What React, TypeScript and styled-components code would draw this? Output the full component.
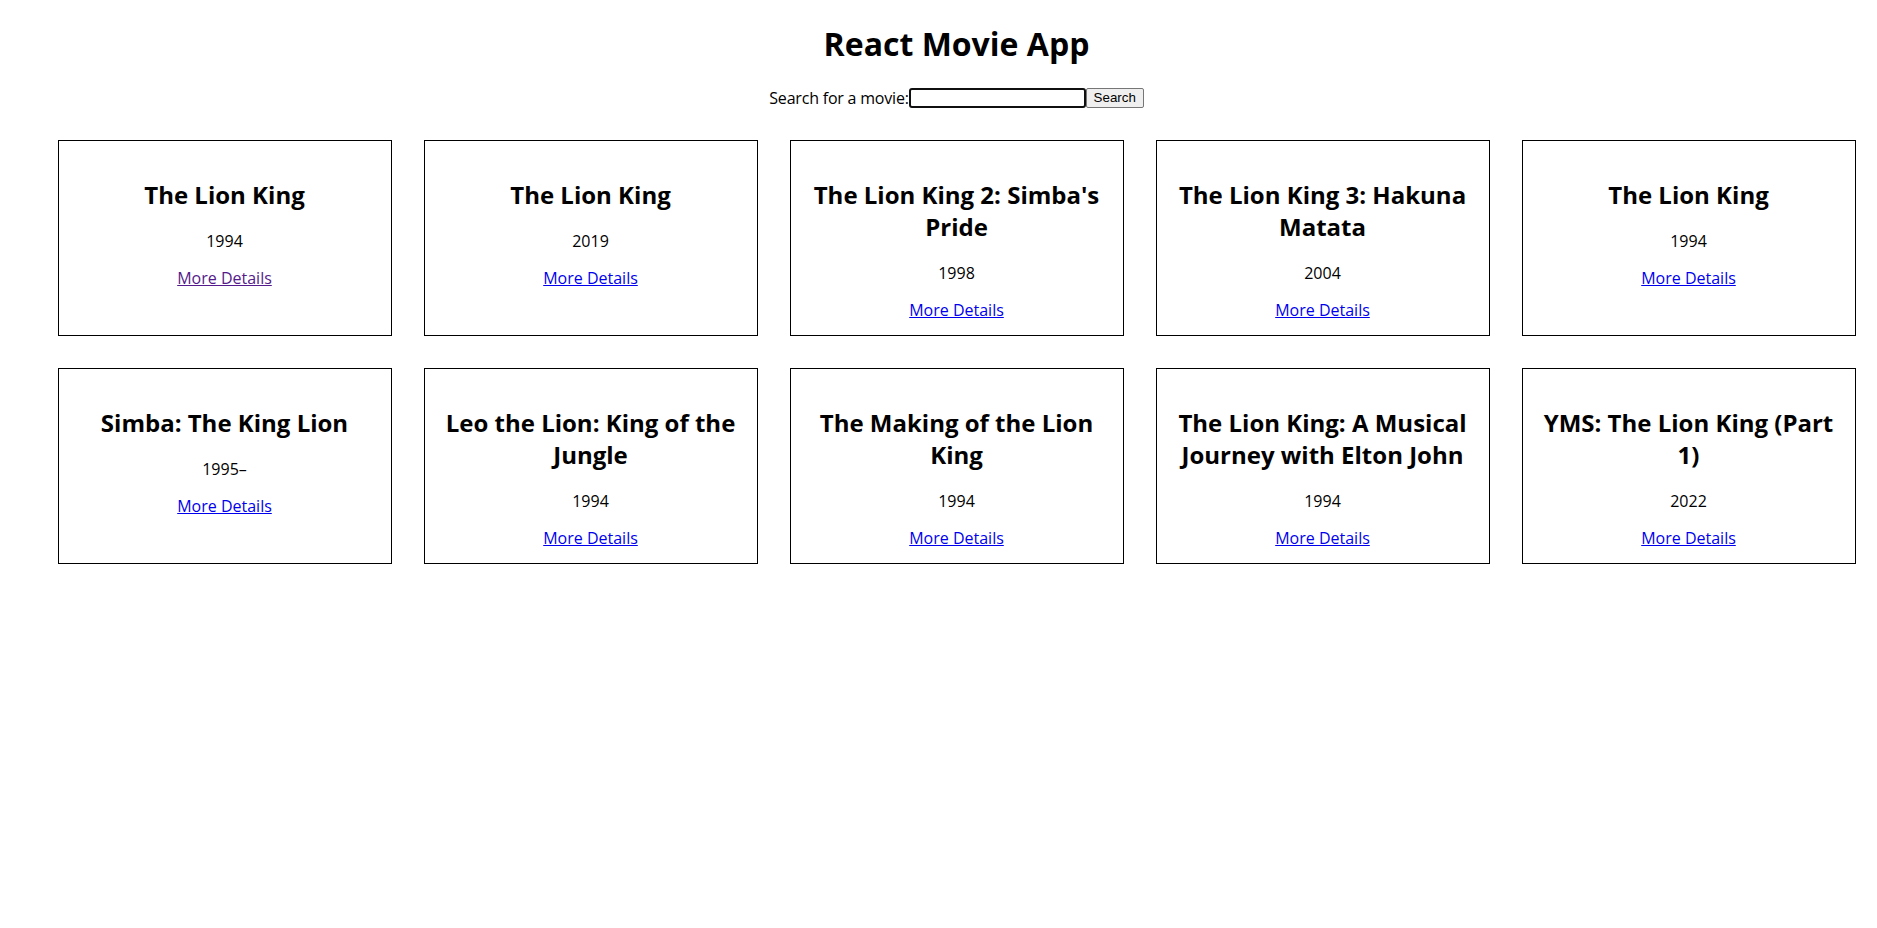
import React from "react";
import styled, { createGlobalStyle } from "styled-components";

const GlobalStyle = createGlobalStyle`
  html, body {
    margin: 0;
    padding: 0;
    background: #ffffff;
  }
  body {
    font-family: "Segoe UI", "Open Sans", "Noto Sans", sans-serif;
    color: #000000;
  }
`;

const Page = styled.div`
  box-sizing: border-box;
  width: 100%;
  padding-left: 36px;
  text-align: center;
`;

const Title = styled.h1`
  margin: 21.5px 0 21.5px;
  font-size: 32px;
  line-height: 43px;
  font-weight: 700;
`;

const SearchForm = styled.form`
  display: flex;
  justify-content: center;
  align-items: center;
  height: 24px;
  margin: 0;
`;

const Label = styled.label`
  font-size: 16px;
  line-height: 21px;
  letter-spacing: -0.2px;
`;

const SearchInput = styled.input`
  box-sizing: border-box;
  width: 177px;
  height: 20px;
  margin: 0;
  padding: 1px 2px;
  border: 2px solid #101010;
  border-radius: 3px;
  outline: none;
  font-size: 13.33px;
  font-family: "Liberation Sans", Arial, sans-serif;
`;

const SearchButton = styled.button`
  box-sizing: border-box;
  width: 58px;
  height: 20px;
  margin: 0;
  padding: 1px 6px;
  border: 1px solid #767676;
  border-radius: 2px;
  background: #efefef;
  color: #000;
  font-size: 13.33px;
  font-family: "Liberation Sans", Arial, sans-serif;
  line-height: 16px;
`;

const Grid = styled.div`
  display: grid;
  grid-template-columns: repeat(5, 334px);
  column-gap: 32px;
  row-gap: 32px;
  justify-content: center;
  margin-top: 30px;
`;

const Card = styled.div`
  box-sizing: border-box;
  border: 1px solid #000;
  padding: 18px 16px 14px;
  text-align: center;
`;

const MovieTitle = styled.h2`
  margin: 20px 0;
  font-size: 24px;
  line-height: 32px;
  font-weight: 700;
`;

const Year = styled.p`
  margin: 0;
  font-size: 16px;
  line-height: 21px;
`;

const DetailsLink = styled.a<{ $visited?: boolean }>`
  display: block;
  margin-top: 16px;
  font-size: 16px;
  line-height: 21px;
  color: ${(p) => (p.$visited ? "#551a8b" : "#0000ee")};
  text-decoration: underline;
  width: fit-content;
  margin-left: auto;
  margin-right: auto;
`;

const movies = [
  { title: "The Lion King", year: "1994", visited: true },
  { title: "The Lion King", year: "2019" },
  { title: "The Lion King 2: Simba's Pride", year: "1998" },
  { title: "The Lion King 3: Hakuna Matata", year: "2004" },
  { title: "The Lion King", year: "1994" },
  { title: "Simba: The King Lion", year: "1995–" },
  { title: "Leo the Lion: King of the Jungle", year: "1994" },
  { title: "The Making of the Lion King", year: "1994" },
  { title: "The Lion King: A Musical Journey with Elton John", year: "1994" },
  { title: "YMS: The Lion King (Part 1)", year: "2022" },
];

export default function App() {
  return (
    <>
      <GlobalStyle />
      <Page>
        <Title>React Movie App</Title>
        <SearchForm onSubmit={(e) => e.preventDefault()}>
          <Label htmlFor="q">Search for a movie:</Label>
          <SearchInput id="q" type="text" />
          <SearchButton type="submit">Search</SearchButton>
        </SearchForm>
        <Grid>
          {movies.map((m, i) => (
            <Card key={i}>
              <MovieTitle>{m.title}</MovieTitle>
              <Year>{m.year}</Year>
              <DetailsLink href="#" $visited={m.visited}>
                More Details
              </DetailsLink>
            </Card>
          ))}
        </Grid>
      </Page>
    </>
  );
}
